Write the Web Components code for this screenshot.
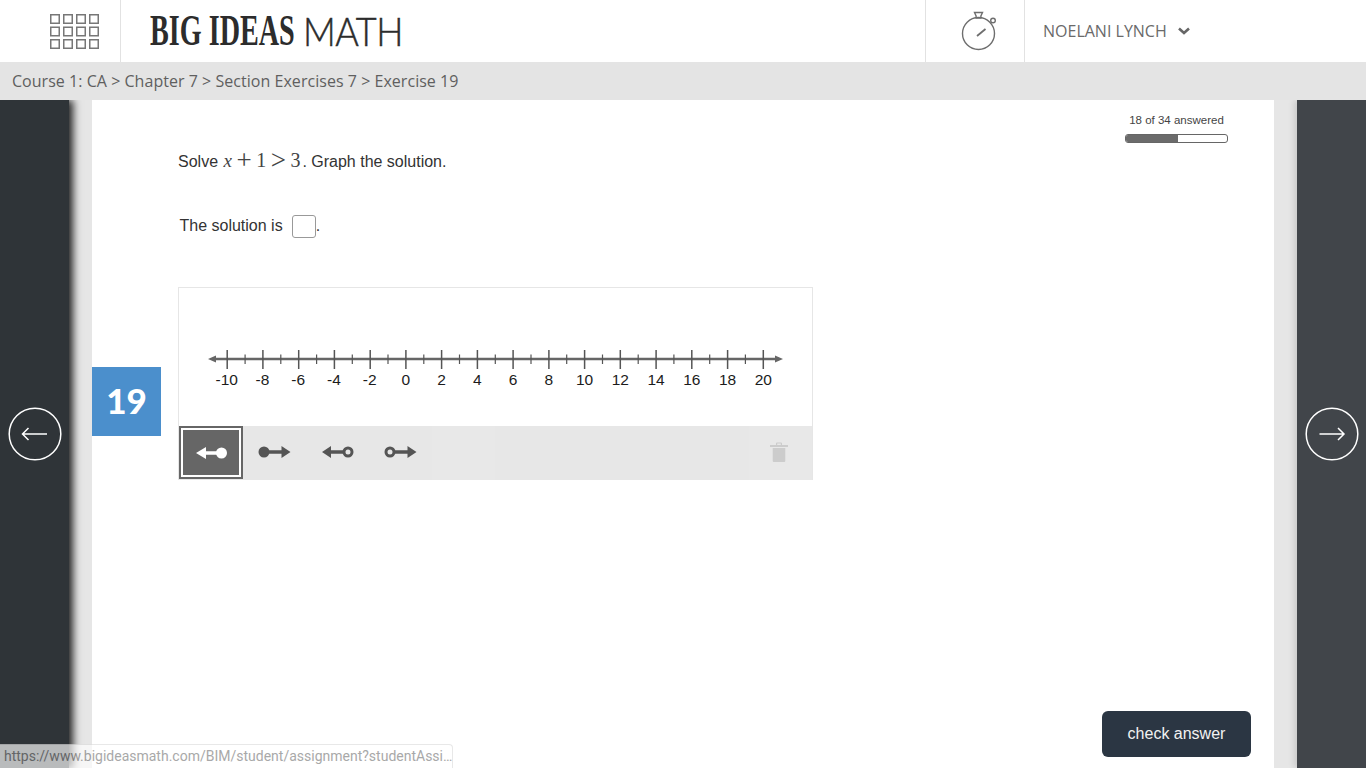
<!DOCTYPE html>
<html>
<head>
<meta charset="utf-8">
<title>Big Ideas Math</title>
<style>
  html, body { margin: 0; height: 100%; overflow: hidden; }
  body { background: #e6e6e6; font-family: "Liberation Sans", Arial, sans-serif; }
  #app { display: flex; flex-direction: column; height: 768px; position: relative; }
</style>
</head>
<body>
<div id="app">
  <bim-header name="NOELANI LYNCH"></bim-header>
  <bim-breadcrumb>Course 1: CA &gt; Chapter 7 &gt; Section Exercises 7 &gt; Exercise 19</bim-breadcrumb>
  <bim-workspace>
    <nav-panel slot="left" direction="left"></nav-panel>
    <question-sheet number="19">
      <progress-meter answered="18" total="34"></progress-meter>
      <number-line-tool></number-line-tool>
    </question-sheet>
    <nav-panel slot="right" direction="right"></nav-panel>
  </bim-workspace>
  <status-bubble>https://www.bigideasmath.com/BIM/student/assignment?studentAssi…</status-bubble>
</div>

<script>
// top bar with the apps grid, the logo, the timer and the user menu
class BimHeader extends HTMLElement {
  constructor() {
    super();
    this.attachShadow({ mode: 'open' });
    this.render();
  }

  render() {
    // apps grid is 4 x 3 small squares
    let squares = '';
    for (let row = 0; row < 3; row++) {
      for (let col = 0; col < 4; col++) {
        squares += `<rect x="${0.75 + col * 13}" y="${0.75 + row * 12.5}" width="8.5" height="8.5"/>`;
      }
    }

    this.shadowRoot.innerHTML = `
      <style>
        :host {
          display: flex;
          height: 62px;
          background: #fff;
          flex: none;
        }
        .apps {
          width: 121px;
          display: flex;
          align-items: center;
          justify-content: flex-end;
          padding-right: 21px;
          box-sizing: border-box;
          border-right: 1px solid #e2e2e2;
        }
        .apps svg { display: block; }
        .logo {
          flex: 1;
          display: flex;
          align-items: center;
          padding-left: 29px;
          color: #2c2c2c;
          white-space: nowrap;
          overflow: hidden;
        }
        .logo .big {
          font: bold 44px/62px "Liberation Serif", serif;
          display: inline-block;
          width: 153px;
          transform: scaleX(0.64);
          transform-origin: left center;
        }
        .logo .math {
          font: 300 40px/62px Lato, sans-serif;
          display: inline-block;
          transform: scaleX(0.9);
          transform-origin: left center;
          letter-spacing: -0.5px;
          -webkit-text-stroke: 0.5px #2c2c2c;
        }
        .timer {
          width: 100px;
          box-sizing: border-box;
          display: flex;
          align-items: center;
          justify-content: center;
          padding-left: 8px;
          border-left: 1px solid #e2e2e2;
          border-right: 1px solid #e2e2e2;
        }
        .user {
          width: 341px;
          display: flex;
          align-items: center;
          padding-left: 18px;
          box-sizing: border-box;
          font: 16px "Open Sans", sans-serif;
          color: #6a6a6a;
          gap: 11px;
        }
      </style>
      <div class="apps">
        <svg width="49" height="35" viewBox="0 0 49 35" fill="none" stroke="#777" stroke-width="1.5">${squares}</svg>
      </div>
      <div class="logo"><span class="big">BIG IDEAS</span><span class="math">MATH</span></div>
      <div class="timer">
        <svg width="36" height="42" viewBox="0 0 36 42" fill="none" stroke="#6e6e6e" stroke-width="1.4">
          <circle cx="17.5" cy="23.500" r="16"/>
          <path d="M13.500 2.500h8l-1.600 3.500v2h-4.800V6z"/>
          <circle cx="32" cy="10.500" r="2.300"/>
          <path d="M16 26l8.500-7" stroke-width="1.800"/>
        </svg>
      </div>
      <div class="user">
        <span>${this.getAttribute('name')}</span>
        <svg width="12" height="8" viewBox="0 0 12 8" fill="none" stroke="#666" stroke-width="2.600"><path d="M1 1.500l5 4.500 5-4.500"/></svg>
      </div>
    `;
  }
}

// grey strip under the header
class BimBreadcrumb extends HTMLElement {
  constructor() {
    super();
    this.attachShadow({ mode: 'open' });
    this.shadowRoot.innerHTML = `
      <style>
        :host {
          display: block;
          height: 38px;
          flex: none;
          background: #e4e4e4;
          color: #5f5f5f;
          font: 16px/38px "Open Sans", sans-serif;
          letter-spacing: 0.035px;
          padding-left: 12px;
        }
      </style>
      <slot></slot>
    `;
  }
}

// three column area: previous, sheet, next
class BimWorkspace extends HTMLElement {
  constructor() {
    super();
    this.attachShadow({ mode: 'open' });
    this.shadowRoot.innerHTML = `
      <style>
        :host {
          display: grid;
          grid-template-columns: 69px 1182px 69px;
          justify-content: space-between;
          flex: 1;
          min-height: 0;
          background: #e6e6e6;
        }
      </style>
      <slot name="left"></slot>
      <slot></slot>
      <slot name="right"></slot>
    `;
  }
}

// dark side panel with the round arrow button
class NavPanel extends HTMLElement {
  constructor() {
    super();
    this.attachShadow({ mode: 'open' });
    const isLeft = this.getAttribute('direction') === 'left';
    const arrow = isLeft
      ? 'M39 27H14.500M20.500 21L14.500 27l6 6'
      : 'M14.500 27H39M33 21L39 27l-6 6';

    this.shadowRoot.innerHTML = `
      <style>
        :host {
          display: flex;
          align-items: center;
          justify-content: center;
          background: ${isLeft ? '#2f3438' : '#41454a'};
          box-shadow: ${isLeft ? '4px 0 8px rgba(0,0,0,.85)' : '-3px 0 6px rgba(0,0,0,.12)'};
          clip-path: ${isLeft ? 'inset(0 -30px 0 0)' : 'inset(0 0 0 -30px)'};
        }
        svg { display: block; }
      </style>
      <svg width="54" height="54" viewBox="0 0 54 54" fill="none" stroke="#fff">
        <circle cx="27" cy="27" r="25.800" stroke-width="1.500"/>
        <path d="${arrow}" stroke-width="1.500"/>
      </svg>
    `;
  }
}

// white column with the question itself
class QuestionSheet extends HTMLElement {
  constructor() {
    super();
    this.attachShadow({ mode: 'open' });
    this.shadowRoot.innerHTML = `
      <style>
        :host {
          display: flex;
          flex-direction: column;
          background: #fff;
          position: relative;
          padding: 13px 23px 11px 86px;
          box-sizing: border-box;
          color: #333;
          font-size: 16px;
        }
        .top { display: flex; justify-content: flex-end; height: 31px; padding-right: 23px; }
        .prompt { height: 30px; line-height: 30px; white-space: nowrap; margin-top: 3px; }
        .math { font: 20px "Liberation Serif", serif; color: #444; margin-right: 2px; }
        .math i { margin-left: 1px; font-size: 19px; }
        .math b {
          font-weight: normal;
          font-size: 27px;
          line-height: 0;
          margin: 0 4.500px;
          vertical-align: -1.500px;
        }
        .answer {
          margin-top: 37px;
          margin-left: 1.500px;
          height: 24px;
          display: flex;
          align-items: center;
          white-space: nowrap;
        }
        .box {
          width: 22px;
          height: 21px;
          border: 1px solid #999;
          border-radius: 3px;
          margin-left: 9px;
          background: #fff;
        }
        .tool { margin-top: 49px; }
        .badge {
          position: absolute;
          left: 0;
          top: 267px;
          width: 69px;
          height: 69px;
          background: #4b8fcc;
          color: #fff;
          font: 900 35px/66px Lato, sans-serif;
          text-align: center;
        }
        .check {
          margin-top: auto;
          align-self: flex-end;
          width: 149px;
          height: 46px;
          border-radius: 6px;
          background: #2b3643;
          color: #f2f2f2;
          font: 16px/45px "Liberation Sans", sans-serif;
          text-align: center;
        }
      </style>
      <div class="top"><slot name="meter"></slot></div>
      <div class="prompt">Solve <span class="math"><i>x</i><b>+</b>1<b>&gt;</b>3</span>. Graph the solution.</div>
      <div class="answer">The solution is <span class="box"></span>.</div>
      <div class="tool"><slot></slot></div>
      <div class="badge">${this.getAttribute('number')}</div>
      <div class="check">check answer</div>
    `;
    const meter = this.querySelector('progress-meter');
    if (meter) meter.slot = 'meter';
  }
}

// little "n of m answered" bar at the top right of the sheet
class ProgressMeter extends HTMLElement {
  constructor() {
    super();
    this.attachShadow({ mode: 'open' });
    const answered = parseInt(this.getAttribute('answered'));
    const total = parseInt(this.getAttribute('total'));
    const percent = answered / total * 100;

    this.shadowRoot.innerHTML = `
      <style>
        :host {
          display: block;
          width: 103px;
          text-align: center;
          font-size: 11.500px;
          color: #444;
          white-space: nowrap;
        }
        .label { line-height: 14px; }
        .bar {
          margin-top: 7px;
          height: 9px;
          box-sizing: border-box;
          border: 1px solid #666;
          border-radius: 3px;
          overflow: hidden;
          background: #fff;
        }
        .fill { height: 100%; width: ${percent - 1}%; background: #6b6b6b; }
      </style>
      <div class="label">${answered} of ${total} answered</div>
      <div class="bar"><div class="fill"></div></div>
    `;
  }
}

// number line graph with its tool strip
class NumberLineTool extends HTMLElement {
  constructor() {
    super();
    this.attachShadow({ mode: 'open' });
    this.render();
  }

  // ticks and labels for -10 to 20
  drawLine() {
    const startX = 48.2;
    const step = 17.87;
    const y = 71;
    let out = '';
    for (let n = -10; n <= 20; n++) {
      const x = (startX + (n + 10) * step).toFixed(1);
      if (n % 2 === 0) {
        out += `<line x1="${x}" x2="${x}" y1="${y - 9}" y2="${y + 10}" stroke="#555" stroke-width="1.500"/>`;
        const labelX = n < 0 ? x - 0.5 : x;
        out += `<text x="${labelX}" y="${y + 26}">${n}</text>`;
      } else {
        out += `<line x1="${x}" x2="${x}" y1="${y - 4.500}" y2="${y + 5}" stroke="#555" stroke-width="1.200"/>`;
      }
    }
    return out;
  }

  render() {
    const dark = '#555';
    this.shadowRoot.innerHTML = `
      <style>
        :host {
          display: block;
          width: 635px;
          height: 193px;
          box-sizing: border-box;
          border: 1px solid #e6e6e6;
          border-bottom: 0;
          background: #fff;
        }
        .canvas { height: 138px; }
        .canvas svg { display: block; }
        text { font: 15.500px "Liberation Sans", sans-serif; fill: #1c1c1c; text-anchor: middle; }
        .tools {
          height: 54px;
          background: #e7e7e7;
          display: flex;
        }
        .tool {
          width: 63px;
          flex: none;
          display: flex;
          align-items: center;
          justify-content: center;
          padding-bottom: 2px;
          box-sizing: border-box;
        }
        .tool.active {
          width: 64px;
          height: 53px;
          padding-bottom: 0;
          background: #666;
          border: 2px solid #666;
          box-shadow: inset 0 0 0 2px #fff;
        }
        .tool.active svg { transform: translateX(1px); }
        .blank { width: 63px; background: #e8e8e8; }
        .spacer { flex: 1; }
        .trash {
          width: 63px;
          display: flex;
          align-items: center;
          justify-content: center;
          background: #e8e8e8;
          padding: 0 4px 3px 0;
          box-sizing: border-box;
        }
      </style>
      <div class="canvas">
        <svg width="633" height="138" viewBox="0 0 633 138">
          <line x1="34" x2="600" y1="71" y2="71" stroke="#666" stroke-width="2.400"/>
          <path d="M29 71l8-3.500v7zM604 71l-8-3.500v7z" fill="#666"/>
          ${this.drawLine()}
        </svg>
      </div>
      <div class="tools">
        <div class="tool active">
          <svg width="34" height="14" viewBox="0 0 34 14"><path d="M1 7l10-6v4.300h16v3.400H11V13z" fill="#fff"/><circle cx="26.500" cy="7" r="5.500" fill="#fff"/></svg>
        </div>
        <div class="tool">
          <svg width="34" height="14" viewBox="0 0 34 14"><circle cx="6" cy="7" r="5.500" fill="${dark}"/><path d="M32.500 7l-9-6v4.300H8v3.400h15.500V13z" fill="${dark}"/></svg>
        </div>
        <div class="tool">
          <svg width="34" height="14" viewBox="0 0 34 14"><path d="M1 7l9-6v4.300h17v3.400H10V13z" fill="${dark}"/><circle cx="27" cy="7" r="4" fill="#e7e7e7" stroke="${dark}" stroke-width="3"/></svg>
        </div>
        <div class="tool">
          <svg width="34" height="14" viewBox="0 0 34 14"><circle cx="6" cy="7" r="4" fill="#e7e7e7" stroke="${dark}" stroke-width="3"/><path d="M32.500 7l-9-6v4.300H10v3.400h13.500V13z" fill="${dark}"/></svg>
        </div>
        <div class="blank"></div>
        <div class="spacer"></div>
        <div class="trash">
          <svg width="18" height="20" viewBox="0 0 18 20" fill="#ccc"><path d="M0 3h6V1.200Q6 .4 7 .4h4q1 0 1 .8V3h6v2H0zM7.200 1.500V3h3.600V1.500zM2.700 6h12.600v13q0 1-1 1H3.700q-1 0-1-1z"/></svg>
        </div>
      </div>
    `;
  }
}

// browser link preview, sits over the bottom left corner
class StatusBubble extends HTMLElement {
  constructor() {
    super();
    this.attachShadow({ mode: 'open' });
    this.shadowRoot.innerHTML = `
      <style>
        :host {
          position: absolute;
          left: 0;
          bottom: 0;
          width: 453px;
          height: 24px;
          box-sizing: border-box;
          padding-left: 4px;
          background: #fff;
          opacity: .667;
          border: 1px solid #ddd;
          border-left: 0;
          border-bottom: 0;
          border-radius: 0 4px 0 0;
          color: #7d7d7d;
          font: 14px/22px Roboto, sans-serif;
          white-space: nowrap;
          overflow: hidden;
        }
      </style>
      <slot></slot>
    `;
  }
}

customElements.define('bim-header', BimHeader);
customElements.define('bim-breadcrumb', BimBreadcrumb);
customElements.define('bim-workspace', BimWorkspace);
customElements.define('nav-panel', NavPanel);
customElements.define('question-sheet', QuestionSheet);
customElements.define('progress-meter', ProgressMeter);
customElements.define('number-line-tool', NumberLineTool);
customElements.define('status-bubble', StatusBubble);
</script>
</body>
</html>
